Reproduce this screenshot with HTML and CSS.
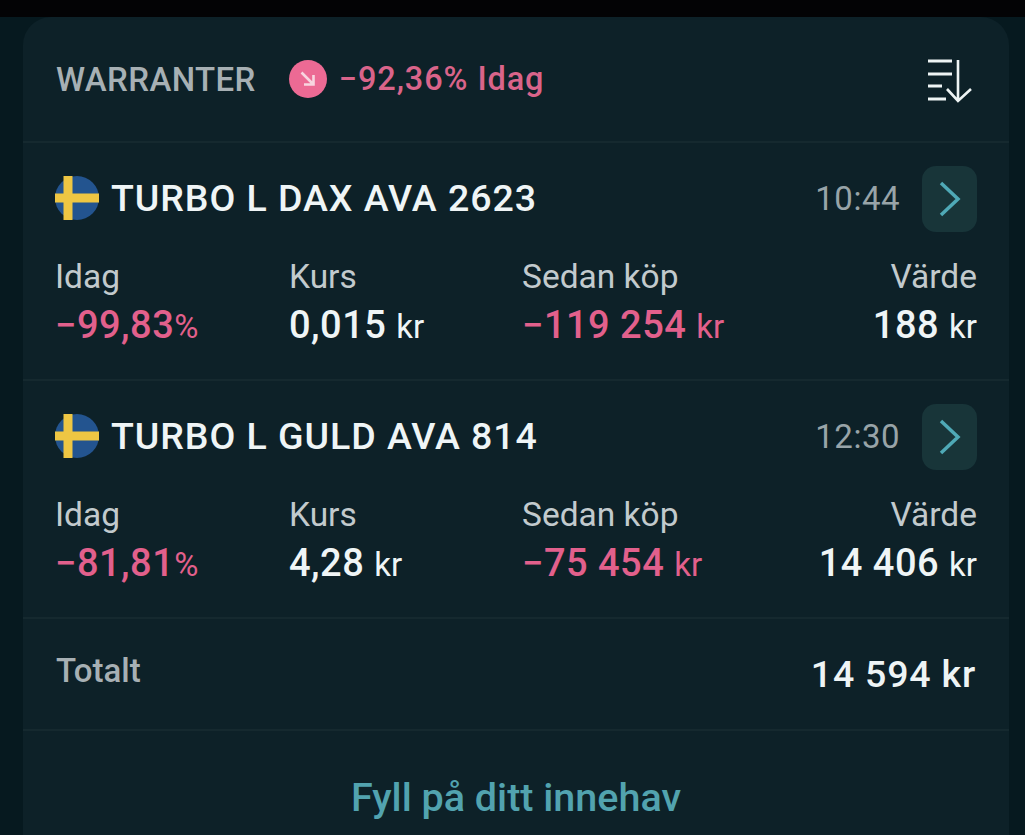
FILE: index.html
```html
<!DOCTYPE html>
<html lang="sv">
<head>
  <meta charset="UTF-8" />
  <title>Warranter</title>
  <link rel="stylesheet" href="styles.css">
</head>
<body>

<div class="card">
  <div class="card-head">
    <span class="head-title">WARRANTER</span>
    <span class="trend-dot">
      <svg width="20" height="20" viewBox="0 0 20 20" fill="none" stroke="#f8d5e0" stroke-width="2.600">
        <path d="M3.500 3.500 L15.500 15.500 M15.500 6 V15.500 H6"/>
      </svg>
    </span>
    <span class="head-change">−92,36% Idag</span>
    <svg class="sort-icon" width="47" height="48" viewBox="0 0 47 48" fill="none" stroke="#eef4f4" stroke-width="3">
      <path d="M2 6 H26 M2 19 H26 M2 31 H16 M2 44 H20"/>
      <path d="M32 5 V46 M21 34 L32 46 L45 34" stroke-width="2.600"/>
    </svg>
  </div>

  <div class="holding">
    <div class="holding-top">
      <svg class="flag" width="44" height="44" viewBox="0 0 44 44">
        <circle cx="22" cy="22" r="22" fill="#23548f"/>
        <path d="M0 22 H44 M13 0 V44" stroke="#eec643" stroke-width="9"/>
      </svg>
      <span class="holding-name">TURBO L DAX AVA 2623</span>
      <span class="holding-time">10:44</span>
      <span class="go-btn">
        <svg width="24" height="36" viewBox="0 0 24 36" fill="none" stroke="#4fa9b6" stroke-width="3.500">
          <path d="M3 2 L20 18 L3 34"/>
        </svg>
      </span>
    </div>
    <div class="stats">
      <div class="stat"><span class="stat-label">Idag</span><span class="stat-val neg">−99,83<small>%</small></span></div>
      <div class="stat"><span class="stat-label">Kurs</span><span class="stat-val">0,015 <small>kr</small></span></div>
      <div class="stat"><span class="stat-label">Sedan köp</span><span class="stat-val neg">−119 254 <small>kr</small></span></div>
      <div class="stat right"><span class="stat-label">Värde</span><span class="stat-val">188 <small>kr</small></span></div>
    </div>
  </div>

  <div class="holding">
    <div class="holding-top">
      <svg class="flag" width="44" height="44" viewBox="0 0 44 44">
        <circle cx="22" cy="22" r="22" fill="#23548f"/>
        <path d="M0 22 H44 M13 0 V44" stroke="#eec643" stroke-width="9"/>
      </svg>
      <span class="holding-name">TURBO L GULD AVA 814</span>
      <span class="holding-time">12:30</span>
      <span class="go-btn">
        <svg width="24" height="36" viewBox="0 0 24 36" fill="none" stroke="#4fa9b6" stroke-width="3.500">
          <path d="M3 2 L20 18 L3 34"/>
        </svg>
      </span>
    </div>
    <div class="stats">
      <div class="stat"><span class="stat-label">Idag</span><span class="stat-val neg">−81,81<small>%</small></span></div>
      <div class="stat"><span class="stat-label">Kurs</span><span class="stat-val">4,28 <small>kr</small></span></div>
      <div class="stat"><span class="stat-label">Sedan köp</span><span class="stat-val neg">−75 454 <small>kr</small></span></div>
      <div class="stat right"><span class="stat-label">Värde</span><span class="stat-val">14 406 <small>kr</small></span></div>
    </div>
  </div>

  <div class="total">
    <span class="total-label">Totalt</span>
    <span class="total-val">14 594 kr</span>
  </div>

  <div class="action">Fyll på ditt innehav</div>
</div>

</body>
</html>
```

FILE: styles.css
```css
html, body {
  margin: 0;
  height: 835px;
  overflow: hidden;
}
body {
  background-color: #06191f;
  border-top: 17px solid #030305;
  box-sizing: border-box;
  padding: 0 16px 0 23px;
  font-family: Roboto, "Liberation Sans", sans-serif;
  color: #eef4f5;
}
.card {
  background-color: #0d2128;
  border-radius: 28px 28px 0 0;
  height: 818px;
}

.card-head {
  height: 124px;
  display: flex;
  align-items: center;
  padding: 0 36px 0 33px;
  box-sizing: border-box;
}
.head-title {
  font-size: 33px;
  font-weight: 500;
  letter-spacing: 0.4px;
  color: #a7b0b4;
  margin-right: 33px;
}
.trend-dot {
  width: 38px;
  height: 38px;
  border-radius: 50%;
  background-color: #ec6a94;
  display: flex;
  align-items: center;
  justify-content: center;
  margin-right: 12px;
}
.head-change {
  font-size: 32.500px;
  font-weight: 500;
  letter-spacing: 0.9px;
  color: #d9648a;
}
.sort-icon { margin-left: auto; }

.holding {
  height: 238px;
  border-top: 2px solid #15292f;
  box-sizing: border-box;
  padding: 0 32px;
}
.holding-top {
  height: 110px;
  padding-bottom: 2px;
  display: flex;
  align-items: center;
}
.flag { margin-right: 13px; }
.holding-name {
  font-size: 37.500px;
  font-weight: 500;
  letter-spacing: 0.95px;
  margin-left: -1px;
  color: #eff5f6;
}
.holding-time {
  margin-left: auto;
  margin-right: 22px;
  font-size: 33px;
  letter-spacing: 0.5px;
  color: #98a4a8;
}
.go-btn {
  width: 55px;
  height: 66px;
  margin-bottom: -2px;
  border-radius: 14px;
  background-color: #183539;
  display: flex;
  align-items: center;
  justify-content: center;
}

.stats {
  display: grid;
  grid-template-columns: 234px 233px 1fr auto;
  margin-top: 2px;
}
.stat {
  display: flex;
  flex-direction: column;
  gap: 5px;
}
.stat.right { text-align: right; }
.stat-label {
  font-size: 33.500px;
  line-height: 40px;
  color: #c2cacd;
}
.stat-val {
  font-size: 38px;
  line-height: 46px;
  font-weight: 500;
  letter-spacing: 0.5px;
  color: #eff5f6;
}
.stat-val small {
  font-size: 33px;
  font-weight: 400;
  letter-spacing: 0;
}
.neg { color: #e2608c; }

.total {
  height: 112px;
  border-top: 2px solid #15292f;
  box-sizing: border-box;
  display: flex;
  align-items: center;
  justify-content: space-between;
  padding: 0 33px;
}
.total-label {
  font-size: 33px;
  font-weight: 500;
  color: #a7b0b4;
  padding-bottom: 8px;
}
.total-val {
  font-size: 37.500px;
  font-weight: 500;
  letter-spacing: 0.8px;
}

.action {
  border-top: 2px solid #15292f;
  padding-top: 43px;
  text-align: center;
  font-size: 39.500px;
  font-weight: 500;
  color: #52a3af;
}
```
